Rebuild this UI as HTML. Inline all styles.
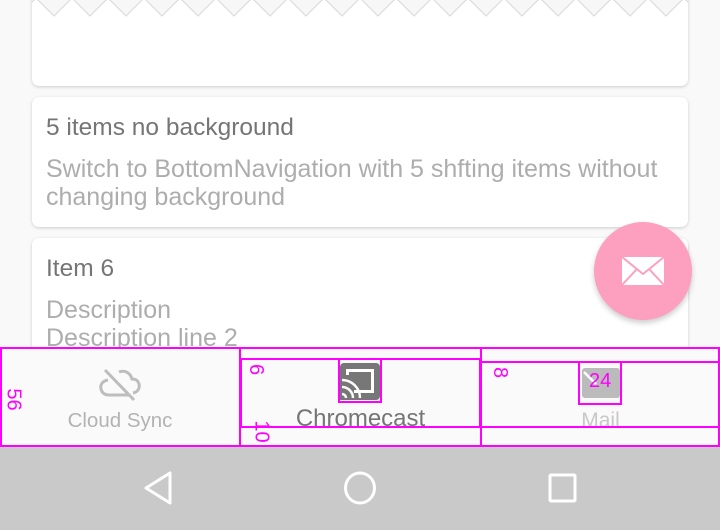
<!DOCTYPE html>
<html><head><style>
*{margin:0;padding:0;box-sizing:border-box}
body{width:720px;height:530px;overflow:hidden;background:#f9f9f9;font-family:"Liberation Sans",sans-serif;position:relative}
.card{position:absolute;left:32px;width:656px;background:#fff;border-radius:7px;box-shadow:0 1px 3px rgba(0,0,0,.18)}
.t{position:absolute;left:14px;font-size:24.5px;line-height:28px;color:#757575;white-space:nowrap}
.s{position:absolute;left:14px;font-size:25px;color:#adadad;line-height:28px;white-space:nowrap}
.mg{position:absolute;border:2px solid #ff00ff}
.num{position:absolute;color:#ff00ff;font-size:20px}
.lbl{position:absolute;text-align:center;line-height:28px;white-space:nowrap}
</style></head><body>
<div class="card" style="top:-20px;height:106px"></div>
<svg style="position:absolute;left:32px;top:0" width="656" height="20">
<defs><pattern id="z" x="4" y="0" width="36" height="20" patternUnits="userSpaceOnUse">
<polygon points="1,-1 18,16 35,-1" fill="#f7f7f7" stroke="#d8d8d8" stroke-width="1"/>
</pattern></defs>
<rect x="0" y="0" width="656" height="20" fill="url(#z)"/>
</svg>
<div class="card" style="top:97px;height:130px">
<div class="t" style="top:17px">5 items no background</div>
<div class="s" style="top:58px">Switch to BottomNavigation with 5 shfting items without<br>changing background</div>
</div>
<div class="card" style="top:238px;height:140px">
<div class="t" style="top:17px">Item 6</div>
<div class="s" style="top:58px">Description<br>Description line 2</div>
</div>
<div style="position:absolute;left:594px;top:222px;width:98px;height:98px;border-radius:50%;background:#fd9fbf;box-shadow:0 3px 6px rgba(0,0,0,.2)"></div>
<svg style="position:absolute;left:621px;top:256px" width="44" height="30" viewBox="0 0 44 30">
<rect x="1" y="1" width="42" height="28" fill="#fff"/>
<path d="M1 1 L22 18 L43 1" fill="none" stroke="#fd9fbf" stroke-width="2"/>
<path d="M1 29 L16 13 M43 29 L28 13" stroke="#fd9fbf" stroke-width="2"/>
</svg>
<div style="position:absolute;left:0;top:347px;width:720px;height:100px;background:#fafafa"></div>
<svg style="position:absolute;left:98px;top:366px" width="44" height="38" viewBox="0 0 44 38">
<path d="M10 14 C4 15 2 19 3 23 C4 27 7 29 11 29 L31 29 M35 27 C40 26 42 22 41 18 C40 14 37 13 34 13 C32 6 26 4 21 6" fill="none" stroke="#bdbdbd" stroke-width="3"/>
<path d="M7 4 L36 34" stroke="#bdbdbd" stroke-width="3"/>
</svg>
<div class="lbl" style="left:0;width:240px;top:407px;font-size:20.5px;color:#b3b3b3">Cloud Sync</div>
<svg style="position:absolute;left:340px;top:363px" width="40" height="37" viewBox="0 0 40 37">
<rect x="0" y="0" width="40" height="37" rx="4" fill="#777"/>
<rect x="6" y="6" width="28" height="24" fill="#fff"/>
<rect x="9" y="9" width="22" height="18" fill="#777"/>
<rect x="0" y="12" width="14" height="25" fill="#777"/>
<path d="M2 17 A18 18 0 0 1 20 35 M2 24 A11 11 0 0 1 13 35" fill="none" stroke="#fafafa" stroke-width="2.5"/>
<path d="M2 31 A4 4 0 0 1 6 35" fill="none" stroke="#fafafa" stroke-width="2.5"/>
</svg>
<div class="lbl" style="left:240px;width:241px;top:405px;font-size:24px;color:#757575">Chromecast</div>
<svg style="position:absolute;left:582px;top:368px" width="38" height="30" viewBox="0 0 38 30">
<rect x="0" y="0" width="38" height="30" rx="3" fill="#bbb"/>
<path d="M2 4 L14 16" stroke="#fff" stroke-width="2.5"/>
</svg>
<div class="lbl" style="left:481px;width:239px;top:407px;font-size:21px;color:#c8c8c8">Mail</div>
<div class="mg" style="left:0;top:347px;width:720px;height:100px"></div>
<div class="mg" style="left:239px;top:347px;width:2px;height:100px;border-width:1px"></div>
<div class="mg" style="left:480px;top:347px;width:2px;height:100px;border-width:1px"></div>
<div class="mg" style="left:240px;top:358px;width:241px;height:70px"></div>
<div class="mg" style="left:480px;top:361px;width:240px;height:67px"></div>
<div class="mg" style="left:338px;top:358px;width:44px;height:45px"></div>
<div class="mg" style="left:578px;top:361px;width:44px;height:44px"></div>
<div class="num" style="left:2px;top:388px;transform:rotate(90deg)">56</div>
<div class="num" style="left:250px;top:358px;transform:rotate(90deg)">6</div>
<div class="num" style="left:250px;top:420px;transform:rotate(90deg)">10</div>
<div class="num" style="left:494px;top:361px;transform:rotate(90deg)">8</div>
<div class="num" style="left:589px;top:370px">24</div>
<div style="position:absolute;left:0;top:447px;width:720px;height:83px;background:#c9c9c9"></div>
<svg style="position:absolute;left:0;top:447px" width="720" height="83">
<g fill="none" stroke="#fff" stroke-width="3" stroke-linejoin="round">
<path d="M170 26 L170 56 L146 41 Z"/>
<ellipse cx="360" cy="41" rx="14.5" ry="15"/>
<rect x="550" y="28" width="25" height="26" rx="1"/>
</g></svg>
</body></html>
